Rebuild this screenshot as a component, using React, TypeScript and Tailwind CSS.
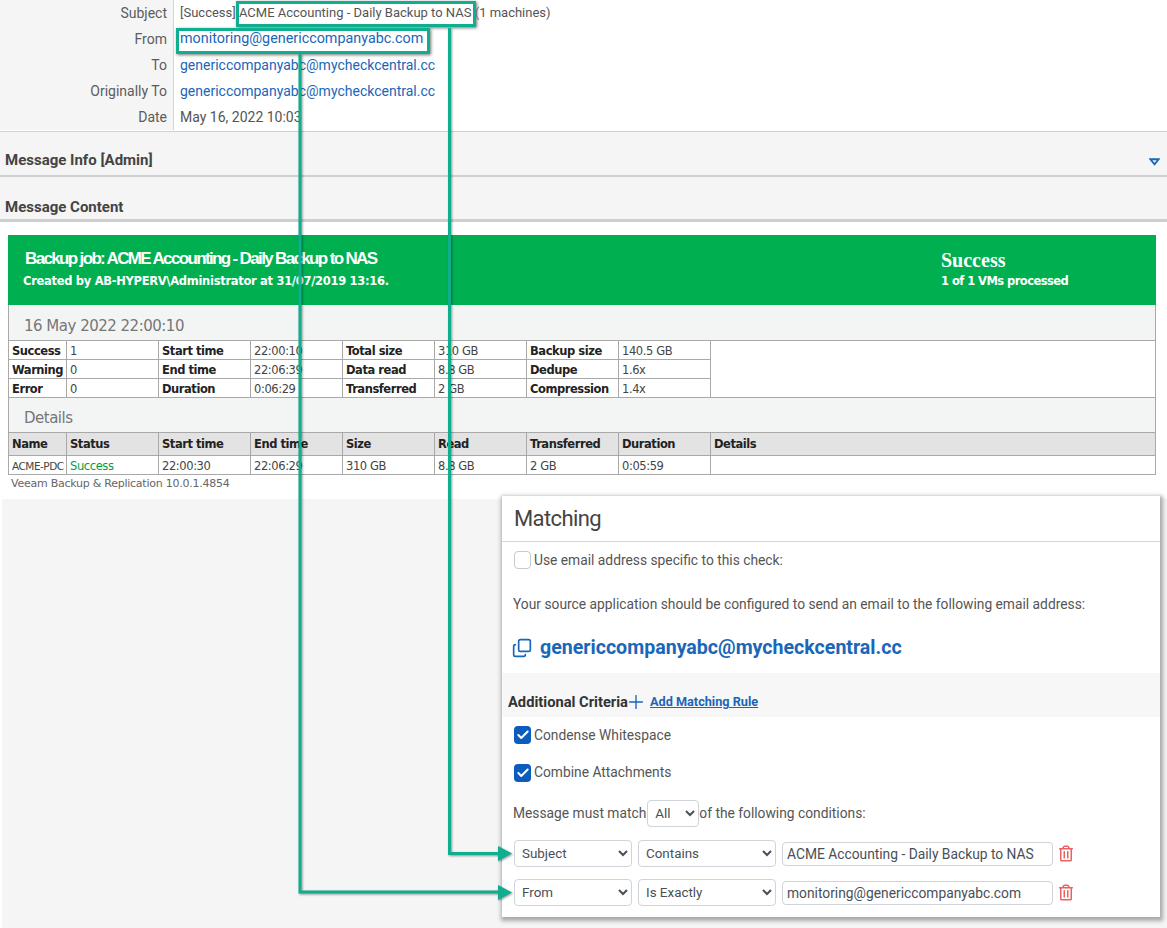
import { Check, Copy, Plus } from 'lucide-react';
import { FaRegTrashAlt } from 'react-icons/fa';

const headerRows = [
  { label: 'Subject', value: '[Success] ACME Accounting - Daily Backup to NAS (1 machines)', size: 'text-[13px]', color: 'text-[#555]' },
  { label: 'From', value: 'monitoring@genericcompanyabc.com', size: 'text-[14.35px]', color: 'text-[#1a66b8]' },
  { label: 'To', value: 'genericcompanyabc@mycheckcentral.cc', size: 'text-[14px]', color: 'text-[#1a66b8]' },
  { label: 'Originally To', value: 'genericcompanyabc@mycheckcentral.cc', size: 'text-[14px]', color: 'text-[#1a66b8]' },
  { label: 'Date', value: 'May 16, 2022 10:03', size: 'text-[14px]', color: 'text-[#555]' },
];

const summaryRows = [
  ['Success', '1', 'Start time', '22:00:10', 'Total size', '310 GB', 'Backup size', '140.5 GB'],
  ['Warning', '0', 'End time', '22:06:39', 'Data read', '8.8 GB', 'Dedupe', '1.6x'],
  ['Error', '0', 'Duration', '0:06:29', 'Transferred', '2 GB', 'Compression', '1.4x'],
];

const detailHead = ['Name', 'Status', 'Start time', 'End time', 'Size', 'Read', 'Transferred', 'Duration', 'Details'];
const detailRow = ['ACME-PDC', 'Success', '22:00:30', '22:06:29', '310 GB', '8.8 GB', '2 GB', '0:05:59', ''];

const cell = 'border border-[#a9a9a9] px-[3px] pb-0 pt-[2px] text-left align-middle leading-[16px] overflow-hidden whitespace-nowrap';

const Cols = () => (
  <colgroup>
    <col className="w-[58px]" />
    <col className="w-[92px]" />
    <col className="w-[92px]" />
    <col className="w-[92px]" />
    <col className="w-[92px]" />
    <col className="w-[92px]" />
    <col className="w-[92px]" />
    <col className="w-[92px]" />
    <col />
  </colgroup>
);

const Ticked = ({ label }: { label: string }) => (
  <div className="flex items-center gap-[3px]">
    <span className="flex h-[18px] w-[17px] items-center justify-center rounded-[4px] bg-[#0b5cbd]">
      <Check className="h-[14px] w-[14px] text-white" strokeWidth={3.5} />
    </span>
    <span>{label}</span>
  </div>
);

const Rule = ({ field, op, value }: { field: string; op: string; value: string }) => (
  <div className="flex items-center">
    <select
      defaultValue={field}
      className="h-[27px] w-[118px] rounded-[4px] border border-[#ced4da] bg-white pl-[3px] text-[13.4px] text-[#495057]"
    >
      <option>{field}</option>
    </select>
    <select
      defaultValue={op}
      className="ml-[6px] h-[27px] w-[138px] rounded-[4px] border border-[#ced4da] bg-white pl-[3px] text-[13.4px] text-[#495057]"
    >
      <option>{op}</option>
    </select>
    <input
      readOnly
      value={value}
      className="ml-[6px] h-[24px] w-[271px] rounded-[4px] border border-[#ced4da] bg-white px-[4px] text-[13.8px] text-[#495057]"
    />
    <FaRegTrashAlt className="ml-[6px] h-[17px] w-[14px] text-[#e8635f]" />
  </div>
);

export default function App() {
  return (
    <div className="relative h-[928px] w-[1167px] overflow-hidden bg-white font-['Roboto',sans-serif] text-[14px] text-[#495057]">
      <div>
        <div className="border-b border-[#cfcfcf] pb-[1px]">
          {headerRows.map((row) => (
            <div key={row.label} className="flex h-[26px]">
              <div className="flex w-[174px] items-center justify-end border-r border-[#d5d5d5] bg-[#f5f5f5] pr-[6px] text-[#5c5c5c]">
                {row.label}
              </div>
              <div className={`flex items-center pl-[6px] ${row.color} ${row.size}`}>{row.value}</div>
            </div>
          ))}
        </div>
        <div className="flex h-[45px] items-center justify-between border-b-2 border-[#cfcfcf] bg-[#f5f5f5] pl-[5px] pr-[7px] pt-[13px] text-[15px] font-bold text-[#444]">
          <span>Message Info [Admin]</span>
          <svg viewBox="0 0 12 8" className="mt-[4px] h-[8px] w-[11px]">
            <path d="M1.5 1h9L6 6.5z" fill="none" stroke="#1a66b8" strokeWidth="2" />
          </svg>
        </div>
        <div className="flex h-[45px] items-center border-b-[3px] border-[#cfcfcf] bg-[#f5f5f5] pl-[5px] pt-[19px] text-[15px] font-bold text-[#444]">
          Message Content
        </div>
      </div>

      <div className="mx-[8px] mt-[13px] w-[1148px] font-['DejaVu_Sans',sans-serif] text-[11.5px] text-[#222]">
        <div className="flex h-[70px] bg-[#00b050] text-white">
          <div className="w-[933px] pl-[15px]">
            <div className="mt-[13px] pl-[2px] font-['Liberation_Sans',sans-serif] text-[17px] font-bold leading-[22px] tracking-[-1.65px]">
              Backup job: ACME Accounting - Daily Backup to NAS
            </div>
            <div className="mt-[3px] text-[11.5px] font-bold leading-[16px] tracking-[-0.3px]">
              Created by AB-HYPERV\Administrator at 31/07/2019 13:16.
            </div>
          </div>
          <div>
            <div className="mt-[14px] font-['Liberation_Serif',serif] text-[20px] font-bold leading-[22px]">Success</div>
            <div className="mt-[2px] text-[11.5px] font-bold leading-[16px] tracking-[-0.55px]">1 of 1 VMs processed</div>
          </div>
        </div>
        <div className="flex h-[35px] items-center border-x border-[#a9a9a9] bg-[#f3f5f4] pl-[15px] pt-[8px] text-[15px] tracking-[-0.5px] text-[#777]">
          16 May 2022 22:00:10
        </div>
        <table className="w-full table-fixed border-collapse">
          <Cols />
          <tbody>
            {summaryRows.map((row) => (
              <tr key={row[0]} className="h-[19px]">
                {row.map((text, i) => (
                  <td key={text} className={`${cell} ${i % 2 === 0 ? 'font-bold tracking-[-0.45px]' : 'tracking-[-0.4px] text-[#444]'}`}>
                    {text}
                  </td>
                ))}
                {row[0] === 'Success' ? <td rowSpan={3} className={cell} /> : null}
              </tr>
            ))}
          </tbody>
        </table>
        <div className="flex h-[34px] items-center border-x border-[#a9a9a9] bg-[#f3f5f4] pl-[15px] pt-[7px] text-[15px] tracking-[-0.5px] text-[#777]">
          Details
        </div>
        <table className="w-full table-fixed border-collapse">
          <Cols />
          <tbody>
            <tr className="h-[23px] bg-[#e3e3e3]">
              {detailHead.map((text) => (
                <td key={text} className={`${cell} !pt-0 font-bold tracking-[-0.45px]`}>
                  {text}
                </td>
              ))}
            </tr>
            <tr className="h-[19px]">
              {detailRow.map((text, i) => (
                <td
                  key={i}
                  className={`${cell} ${i === 0 ? 'text-[10.5px] tracking-[-0.5px]' : 'tracking-[-0.4px]'} ${i === 1 ? 'text-[#00a040]' : 'text-[#444]'}`}
                >
                  {text}
                </td>
              ))}
            </tr>
          </tbody>
        </table>
        <div className="mt-[1px] pl-[3px] text-[11px] leading-[16px] tracking-[-0.25px] text-[#666]">
          Veeam Backup &amp; Replication 10.0.1.4854
        </div>
      </div>

      <div className="absolute inset-x-0 bottom-0 top-[499px] ml-[2px] bg-[#f5f5f5]" />

      <div className="absolute left-[502px] top-[496px] h-[421px] w-[658px] bg-white text-[13.8px] text-[#555] shadow-[1px_2px_4px_2px_#a8aaa9]">
        <div className="flex h-[46px] items-center border-b border-[#d5d5d5] pl-[12px] text-[22px] tracking-[-0.6px] text-[#444]">
          Matching
        </div>
        <div className="mt-[8px] flex items-center gap-[3px] pl-[12px]">
          <span className="h-[18px] w-[17px] rounded-[4px] border border-[#c9c9c9] bg-white" />
          <span>Use email address specific to this check:</span>
        </div>
        <div className="mt-[23px] pl-[11px]">
          Your source application should be configured to send an email to the following email address:
        </div>
        <div className="mt-[19px] flex items-center gap-[8px] pl-[10px] text-[19.6px] font-bold text-[#1a66b8]">
          <Copy className="h-[20px] w-[20px] -scale-y-100" strokeWidth={2} />
          <span>genericcompanyabc@mycheckcentral.cc</span>
        </div>
        <div className="mt-[10px] flex h-[44px] items-center bg-[#f7f7f7] pl-[6px] pt-[14px]">
          <span className="text-[14.7px] font-bold text-[#333]">Additional Criteria</span>
          <Plus className="-mx-[3px] h-[22px] w-[22px] text-[#1a66b8]" strokeWidth={1.5} />
          <span className="ml-[6px] text-[12.7px] font-bold text-[#1a66b8] underline">Add Matching Rule</span>
        </div>
        <div className="mt-[8px] pl-[12px]">
          <Ticked label="Condense Whitespace" />
        </div>
        <div className="mt-[17px] pl-[12px]">
          <Ticked label="Combine Attachments" />
        </div>
        <div className="mt-[17px] flex items-center pl-[11px]">
          <span>Message must match</span>
          <select
            defaultValue="All"
            className="ml-[1px] h-[27px] w-[52px] rounded-[4px] border border-[#ced4da] bg-white pl-[3px] text-[13.4px] text-[#495057]"
          >
            <option>All</option>
          </select>
          <span>of the following conditions:</span>
        </div>
        <div className="mt-[13px] pl-[12px]">
          <Rule field="Subject" op="Contains" value="ACME Accounting - Daily Backup to NAS" />
        </div>
        <div className="mt-[12px] pl-[12px]">
          <Rule field="From" op="Is Exactly" value="monitoring@genericcompanyabc.com" />
        </div>
      </div>

      <div className="absolute left-[236px] top-[1px] h-[26px] w-[240px] border-[3px] border-[#0fae8f] shadow-[1px_1px_3px_#777]" />
      <div className="absolute left-[176px] top-[28px] h-[26px] w-[254px] border-[3px] border-[#0fae8f] shadow-[1px_1px_3px_#777]" />
      <svg viewBox="0 0 1167 928" className="absolute left-0 top-0 h-[928px] w-[1167px] drop-shadow-[1px_1px_1px_rgba(0,0,0,0.4)]">
        <g fill="none" stroke="#0fae8f" strokeWidth="3">
          <path d="M449.5 28V853.5H500" />
          <path d="M300 54V892H500" />
        </g>
        <path d="M498 846l14 7.5-14 7.5z M498 885l14 7.5-14 7.5z" fill="#0fae8f" />
      </svg>
    </div>
  );
}
